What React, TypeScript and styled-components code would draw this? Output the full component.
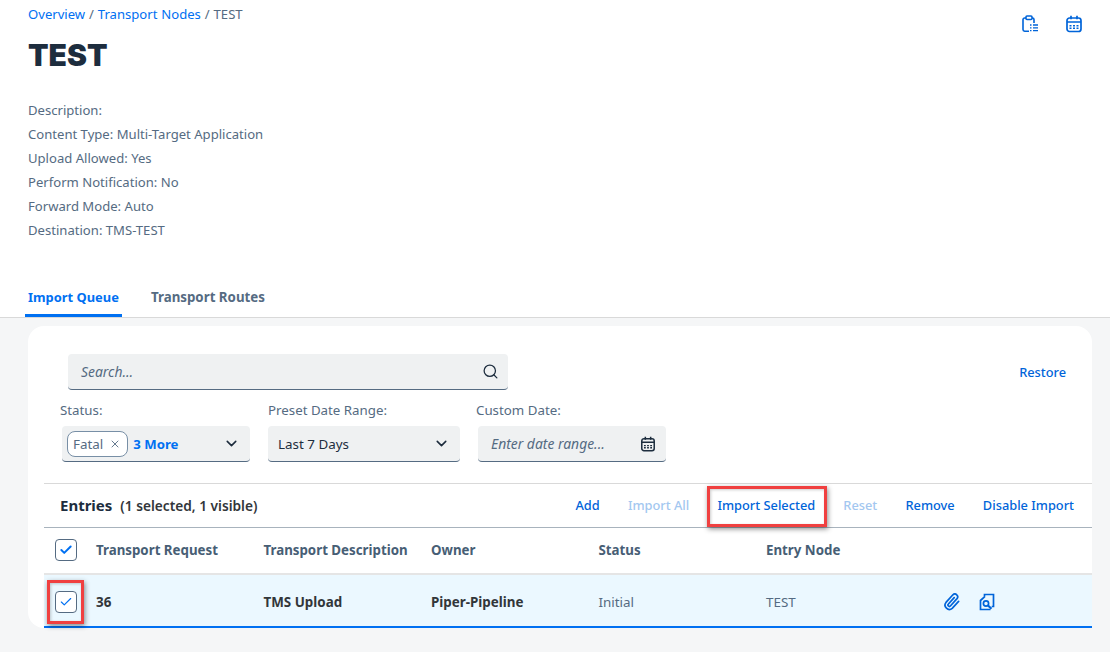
import React from "react";
import styled, { createGlobalStyle } from "styled-components";
import { Check, ChevronDown, Search, X } from "lucide-react";

const FONT = `"Noto Sans", "Open Sans", Arial, sans-serif`;
const BLUE = "#0064d9";
const LINK = "#0070f2";
const TEXT = "#556b82";
const DARK = "#32363a";

const GlobalStyle = createGlobalStyle`
  html, body {
    margin: 0;
    padding: 0;
    background: #f5f6f7;
    font-family: ${FONT};
    overflow: hidden;
  }
  * { box-sizing: border-box; }
`;

const Page = styled.div`
  position: relative;
  width: 1110px;
  height: 652px;
  overflow: hidden;
`;

const Header = styled.header`
  position: relative;
  height: 318px;
  background: #fff;
  border-bottom: 1px solid #d9d9d9;
  padding: 6px 28px 0;
  display: flex;
  flex-direction: column;
`;

const Breadcrumb = styled.div`
  font-size: 13.1px;
  line-height: 17px;
  word-spacing: 0.5px;
  color: ${TEXT};
`;

const Crumb = styled.a`
  color: ${LINK};
`;

const Title = styled.h1`
  margin: 12px 0 0;
  font-family: Inter, ${FONT};
  font-size: 30px;
  line-height: 40px;
  font-weight: 900;
  color: #1d2d3e;
`;

const Info = styled.div`
  margin-top: 23px;
  display: flex;
  flex-direction: column;
`;

const InfoRow = styled.div`
  font-size: 13.1px;
  line-height: 24px;
  color: ${TEXT};
`;

const TopActions = styled.div`
  position: absolute;
  top: 15px;
  right: 27px;
  display: flex;
  gap: 26px;
  color: ${BLUE};
`;

const Tabs = styled.div`
  margin-top: auto;
  display: flex;
  gap: 29px;
`;

const Tab = styled.div<{ $active?: boolean }>`
  height: 40px;
  padding-top: 11px;
  padding-left: ${(p) => (p.$active ? "3px" : "0")};
  margin-left: ${(p) => (p.$active ? "-3px" : "0")};
  width: ${(p) => (p.$active ? "97px" : "auto")};
  font-size: ${(p) => (p.$active ? "12.9px" : "13.3px")};
  line-height: 18px;
  font-weight: 700;
  white-space: nowrap;
  color: ${(p) => (p.$active ? LINK : TEXT)};
  border-bottom: 3px solid ${(p) => (p.$active ? LINK : "transparent")};
`;

const Card = styled.section`
  margin: 8px 18px 0 28px;
  height: 302px;
  background: #fff;
  border-radius: 16px;
  padding-left: 16px;
`;

const Filters = styled.div`
  height: 157px;
  padding-top: 28px;
`;

const SearchRow = styled.div`
  display: flex;
  align-items: center;
  justify-content: space-between;
  padding: 0 26px 0 24px;
`;

const FieldBox = styled.div<{ $w: number; $offset?: number }>`
  width: ${(p) => p.$w}px;
  margin-left: ${(p) => p.$offset ?? 0}px;
  height: 36px;
  padding: 0 10px;
  display: flex;
  align-items: center;
  justify-content: space-between;
  background: #eff1f2;
  border-radius: 4px;
  border-bottom: 1px solid #556b82;
  font-size: 13.4px;
  color: #1d2d3e;
`;

const SearchField = styled(FieldBox)`
  padding: 0 9px 0 13px;
`;

const DateField = styled(FieldBox)`
  padding: 0 10px 0 13px;
`;

const StatusField = styled(FieldBox)`
  padding: 0 10px 0 5px;
`;

const Placeholder = styled.span`
  font-style: italic;
  color: ${TEXT};
  font-size: 13.9px;
`;

const TextAction = styled.span<{ $disabled?: boolean }>`
  font-size: 12.8px;
  font-weight: 500;
  color: ${(p) => (p.$disabled ? "#a3c7f0" : BLUE)};
`;

const FieldRow = styled.div`
  margin-top: 10px;
  padding-left: 16px;
  display: grid;
  grid-template-columns: repeat(3, 208px);
`;

const Field = styled.div`
  display: flex;
  flex-direction: column;
  align-items: flex-start;
`;

const Label = styled.label`
  font-size: 13.3px;
  line-height: 20px;
  color: ${TEXT};
  height: 26px;
`;

const Inline = styled.div`
  display: flex;
  align-items: center;
  gap: 5px;
`;

const Token = styled.span`
  height: 26px;
  padding: 0 6px 0 5px;
  display: inline-flex;
  align-items: center;
  gap: 6px;
  background: #fff;
  border: 1px solid #788fa6;
  border-radius: 8px;
  font-size: 13.4px;
  color: ${TEXT};
`;

const More = styled.span`
  font-size: 13.2px;
  font-weight: 700;
  color: ${LINK};
`;

const Toolbar = styled.div`
  height: 45px;
  border-top: 1px solid #d9d9d9;
  border-bottom: 1px solid #a8b3bd;
  padding: 0 18px 2px 16px;
  display: flex;
  align-items: center;
  justify-content: space-between;
`;

const ToolbarTitle = styled.div`
  display: flex;
  align-items: baseline;
  gap: 8px;
  font-size: 15px;
  font-weight: 700;
  color: #1d2d3e;
`;

const Count = styled.span`
  font-size: 13.7px;
  font-weight: 600;
  color: ${DARK};
`;

const ToolbarActions = styled.div`
  display: flex;
  gap: 28.2px;
`;

const TableRow = styled.div<{ $selected?: boolean }>`
  height: ${(p) => (p.$selected ? "53px" : "47px")};
  padding-top: ${(p) => (p.$selected ? "2px" : "0")};
  padding-bottom: ${(p) => (p.$selected ? "0" : "1px")};
  display: grid;
  grid-template-columns: 52px 167.5px 167.5px 167.5px 167.5px 167px 1fr;
  align-items: center;
  background: ${(p) => (p.$selected ? "#ebf8ff" : "#fff")};
  border-bottom: 2px solid ${(p) => (p.$selected ? LINK : "#e5e5e5")};
`;

const HeadCell = styled.div`
  font-size: 13.3px;
  font-weight: 700;
  color: #475e75;
`;

const Cell = styled.div<{ $strong?: boolean }>`
  font-size: 13.4px;
  font-weight: ${(p) => (p.$strong ? 700 : 400)};
  color: ${(p) => (p.$strong ? DARK : TEXT)};
`;

const CheckCell = styled.div`
  display: flex;
  padding-left: 11px;
`;

const CheckBox = styled.span`
  width: 22px;
  height: 22px;
  display: flex;
  align-items: center;
  justify-content: center;
  background: #fff;
  border: 1px solid #556b82;
  border-radius: 4px;
  color: ${LINK};
`;

const RowIcons = styled.div`
  display: flex;
  align-items: center;
  gap: 17px;
  padding-left: 10px;
  color: ${BLUE};
`;

const Highlight = styled.div<{ $x: number; $y: number; $w: number; $h: number }>`
  position: absolute;
  left: ${(p) => p.$x}px;
  top: ${(p) => p.$y}px;
  width: ${(p) => p.$w}px;
  height: ${(p) => p.$h}px;
  border: 3px solid #f04040;
  box-shadow: 1px 2px 5px rgba(0, 0, 0, 0.45), inset 1px 1px 3px rgba(0, 0, 0, 0.2);
`;

const ClipboardIcon = () => (
  <svg width="18" height="18" viewBox="0 0 18 18" fill="none" stroke="currentColor" strokeWidth="1.6">
    <path d="M8 16.2H3.6A1.6 1.6 0 0 1 2 14.6V4.6A1.6 1.6 0 0 1 3.6 3H5" />
    <path d="M11 3h.4A1.6 1.6 0 0 1 13 4.6V8" />
    <rect x="5" y="1" width="6" height="3.5" rx="1" />
    <path d="M9 10h1.5M12 10h5M9 12.8h1.5M12 12.8h5M9 15.6h1.5M12 15.6h5" strokeWidth="1.3" />
  </svg>
);

const CalendarIcon = ({ size = 18 }: { size?: number }) => (
  <svg width={size} height={size} viewBox="0 0 18 18" fill="none" stroke="currentColor" strokeWidth="1.7">
    <rect x="2" y="3" width="14" height="13.5" rx="2.5" />
    <path d="M6 .8v3.4M12 .8v3.4M2 7h14" />
    <path d="M4.5 10.8h9M4.5 13.2h9" strokeWidth="1.5" strokeDasharray="2 1.5" />
  </svg>
);

const AttachIcon = () => (
  <svg width="18" height="18" viewBox="0 0 18 18" fill="none" stroke="currentColor" strokeWidth="1.7" strokeLinecap="round">
    <path d="M11.2 4.6 5.4 11a1.4 1.4 0 0 0 2 2l6.6-7.4a2.8 2.8 0 0 0-4.1-3.8L3 9.4a4.3 4.3 0 0 0 6.2 5.9L15.6 8.4" />
  </svg>
);

const DocSearchIcon = () => (
  <svg width="18" height="18" viewBox="0 0 18 18" fill="none" stroke="currentColor" strokeWidth="1.7">
    <path d="M6.5 3.2V1.5h9v12h-1.8" />
    <path d="M7 3.4 2.5 7.5v9h10" />
    <circle cx="8" cy="10.5" r="2.6" />
    <path d="M10 12.5l3.5 3.2" strokeWidth="2.2" />
  </svg>
);

export default function App() {
  return (
    <Page>
      <GlobalStyle />
      <Header>
        <Breadcrumb>
          <Crumb>Overview</Crumb> / <Crumb>Transport Nodes</Crumb> / TEST
        </Breadcrumb>
        <Title>TEST</Title>
        <Info>
          <InfoRow>Description:</InfoRow>
          <InfoRow>Content Type: Multi-Target Application</InfoRow>
          <InfoRow>Upload Allowed: Yes</InfoRow>
          <InfoRow>Perform Notification: No</InfoRow>
          <InfoRow>Forward Mode: Auto</InfoRow>
          <InfoRow>Destination: TMS-TEST</InfoRow>
        </Info>
        <TopActions>
          <ClipboardIcon />
          <CalendarIcon />
        </TopActions>
        <Tabs>
          <Tab $active>Import Queue</Tab>
          <Tab>Transport Routes</Tab>
        </Tabs>
      </Header>
      <Card>
        <Filters>
          <SearchRow>
            <SearchField $w={440}>
              <Placeholder>Search...</Placeholder>
              <Search size={17} strokeWidth={1.8} />
            </SearchField>
            <TextAction>Restore</TextAction>
          </SearchRow>
          <FieldRow>
            <Field>
              <Label>Status:</Label>
              <StatusField $w={188} $offset={2}>
                <Inline>
                  <Token>
                    Fatal <X size={12} strokeWidth={1.8} />
                  </Token>
                  <More>3 More</More>
                </Inline>
                <ChevronDown size={17} strokeWidth={2.2} />
              </StatusField>
            </Field>
            <Field>
              <Label>Preset Date Range:</Label>
              <FieldBox $w={192}>
                Last 7 Days
                <ChevronDown size={17} strokeWidth={2.2} />
              </FieldBox>
            </Field>
            <Field>
              <Label>Custom Date:</Label>
              <DateField $w={188} $offset={2}>
                <Placeholder>Enter date range...</Placeholder>
                <CalendarIcon size={16} />
              </DateField>
            </Field>
          </FieldRow>
        </Filters>
        <Toolbar>
          <ToolbarTitle>
            Entries <Count>(1 selected, 1 visible)</Count>
          </ToolbarTitle>
          <ToolbarActions>
            <TextAction>Add</TextAction>
            <TextAction $disabled>Import All</TextAction>
            <TextAction>Import Selected</TextAction>
            <TextAction $disabled>Reset</TextAction>
            <TextAction>Remove</TextAction>
            <TextAction>Disable Import</TextAction>
          </ToolbarActions>
        </Toolbar>
        <TableRow>
          <CheckCell>
            <CheckBox>
              <Check size={14} strokeWidth={3.4} />
            </CheckBox>
          </CheckCell>
          <HeadCell>Transport Request</HeadCell>
          <HeadCell>Transport Description</HeadCell>
          <HeadCell>Owner</HeadCell>
          <HeadCell>Status</HeadCell>
          <HeadCell>Entry Node</HeadCell>
          <div />
        </TableRow>
        <TableRow $selected>
          <CheckCell>
            <CheckBox>
              <Check size={14} strokeWidth={2} />
            </CheckBox>
          </CheckCell>
          <Cell $strong>36</Cell>
          <Cell $strong>TMS Upload</Cell>
          <Cell $strong>Piper-Pipeline</Cell>
          <Cell>Initial</Cell>
          <Cell>TEST</Cell>
          <RowIcons>
            <AttachIcon />
            <DocSearchIcon />
          </RowIcons>
        </TableRow>
      </Card>
      <Highlight $x={707} $y={486} $w={120} $h={41} />
      <Highlight $x={47} $y={580} $w={37} $h={44} />
    </Page>
  );
}
